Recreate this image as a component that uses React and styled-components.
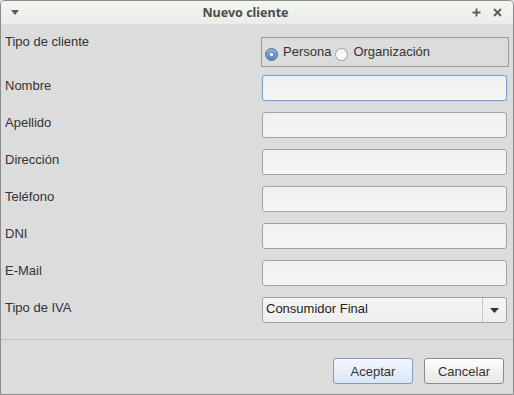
import React from 'react';
import styled, { createGlobalStyle } from 'styled-components';

const GlobalStyle = createGlobalStyle`
  html, body {
    margin: 0;
    padding: 0;
    background: #dcdcdc;
  }
  * {
    box-sizing: border-box;
  }
`;

// Window frame
const Window = styled.div`
  width: 514px;
  height: 395px;
  border: 1px solid #8b8b8b;
  border-radius: 5px 5px 0 0;
  background: #dcdcdc;
  display: flex;
  flex-direction: column;
  overflow: hidden;
  font-family: "Liberation Sans", Arial, sans-serif;
  font-size: 13px;
  color: #333;
`;

const TitleBar = styled.div`
  height: 23px;
  flex: none;
  display: flex;
  align-items: center;
  padding: 0 11px 0 10px;
  background: linear-gradient(to bottom, #f3f5f1, #eaeee8);
`;

const TitleText = styled.div`
  flex: 1;
  text-align: center;
  font-family: "Noto Sans", "Open Sans", sans-serif;
  font-weight: bold;
  font-size: 12.5px;
  color: #4c4c4c;
`;

const TitleIcons = styled.div`
  display: flex;
  gap: 12px;
  align-items: center;
`;

const Form = styled.div`
  display: grid;
  grid-template-columns: 257px 245px;
  row-gap: 11px;
  padding: 13px 0 0 4px;
`;

const Label = styled.div`
  padding-top: 3px;
  margin-top: ${(p) => p.$shift || 0}px;
  line-height: 15px;
  color: #333;
`;

const RadioBox = styled.div`
  margin-left: -1px;
  width: 248px;
  height: 30px;
  border: 1px solid #9a9a9a;
  display: flex;
  align-items: center;
  padding: 5px 0 0 3px;
  margin-bottom: -3px;
`;

const RadioItem = styled.label`
  display: flex;
  align-items: flex-start;
  margin-right: 4px;
`;

const RadioText = styled.span`
  line-height: 15px;
  margin-left: 5px;
  margin-top: -4px;
`;

const Field = styled.div`
  height: 26px;
  border: 1px solid ${(p) => (p.$focused ? '#7f9dc6' : '#a2a2a2')};
  border-radius: 3px;
  background: linear-gradient(to bottom, #f0f0f0, #f5f5f5);
  box-shadow: ${(p) => (p.$focused ? '0 0 0 1px #c5d5ea' : 'none')};
`;

const Combo = styled.div`
  height: 26px;
  border: 1px solid #a2a2a2;
  border-radius: 3px;
  background: linear-gradient(to bottom, #f4f4f4, #eeeeee);
  display: flex;
`;

const ComboText = styled.div`
  flex: 1;
  padding: 3px 0 0 3px;
  line-height: 15px;
  color: #222;
`;

const ComboArrow = styled.div`
  width: 24px;
  border-left: 1px solid #c8c8c8;
  display: flex;
  align-items: center;
  justify-content: center;
`;

const Separator = styled.div`
  height: 1px;
  background: #c2c2c2;
  margin-top: 16px;
`;

const Footer = styled.div`
  display: flex;
  justify-content: flex-end;
  gap: 11px;
  padding: 18px 9px 0 0;
`;

const Button = styled.div`
  width: 80px;
  height: 26px;
  border-radius: 3px;
  border: 1px solid ${(p) => (p.$primary ? '#7e9bc2' : '#8c8c8c')};
  background: ${(p) =>
    p.$primary
      ? 'linear-gradient(to bottom, #f3f7fc, #d9e6f4)'
      : 'linear-gradient(to bottom, #fdfdfd, #e6e6e6)'};
  display: flex;
  align-items: center;
  justify-content: center;
  color: #333;
`;

const Radio = ({ checked }) => (
  <svg width="13" height="13" viewBox="0 0 13 13">
    <defs>
      <linearGradient id="rOn" x1="0" y1="0" x2="0" y2="1">
        <stop offset="0" stopColor="#9bb6da" />
        <stop offset="1" stopColor="#5d80b4" />
      </linearGradient>
      <linearGradient id="rOff" x1="0" y1="0" x2="0" y2="1">
        <stop offset="0" stopColor="#f2f2f2" />
        <stop offset="1" stopColor="#ffffff" />
      </linearGradient>
    </defs>
    <circle
      cx="6.5"
      cy="6.5"
      r="6"
      fill={checked ? 'url(#rOn)' : 'url(#rOff)'}
      stroke={checked ? '#52709c' : '#9a9a9a'}
    />
    {checked && <circle cx="6.5" cy="6.5" r="2.3" fill="#eef3fa" stroke="#4d6a96" strokeWidth="0.8" />}
  </svg>
);

const fields = [
  { label: 'Nombre', focused: true },
  { label: 'Apellido' },
  { label: 'Dirección' },
  { label: 'Teléfono' },
  { label: 'DNI' },
  { label: 'E-Mail' },
];

const App = () => {
  return (
    <>
      <GlobalStyle />
      <Window>
        <TitleBar>
          <svg width="8" height="5" viewBox="0 0 8 5">
            <path d="M0 0 H8 L4 5 Z" fill="#5a5a5a" />
          </svg>
          <TitleText>Nuevo cliente</TitleText>
          <TitleIcons>
            <svg width="9" height="9" viewBox="0 0 9 9">
              <path d="M4.5 0.5 V8.5 M0.5 4.5 H8.5" stroke="#5a5a5a" strokeWidth="1.8" />
            </svg>
            <svg width="9" height="9" viewBox="0 0 9 9">
              <path d="M1 1 L8 8 M8 1 L1 8" stroke="#5a5a5a" strokeWidth="1.8" />
            </svg>
          </TitleIcons>
        </TitleBar>
        <Form>
          <Label $shift={-6}>Tipo de cliente</Label>
          <RadioBox>
            <RadioItem>
              <Radio checked />
              <RadioText>Persona</RadioText>
            </RadioItem>
            <RadioItem>
              <Radio />
              <RadioText>Organización</RadioText>
            </RadioItem>
          </RadioBox>
          {fields.map((f) => (
            <React.Fragment key={f.label}>
              <Label>{f.label}</Label>
              <Field $focused={f.focused} />
            </React.Fragment>
          ))}
          <Label>Tipo de IVA</Label>
          <Combo>
            <ComboText>Consumidor Final</ComboText>
            <ComboArrow>
              <svg width="9" height="5" viewBox="0 0 9 5">
                <path d="M0 0 H9 L4.5 5 Z" fill="#333" />
              </svg>
            </ComboArrow>
          </Combo>
        </Form>
        <Separator />
        <Footer>
          <Button $primary>Aceptar</Button>
          <Button>Cancelar</Button>
        </Footer>
      </Window>
    </>
  );
};

export default App;
